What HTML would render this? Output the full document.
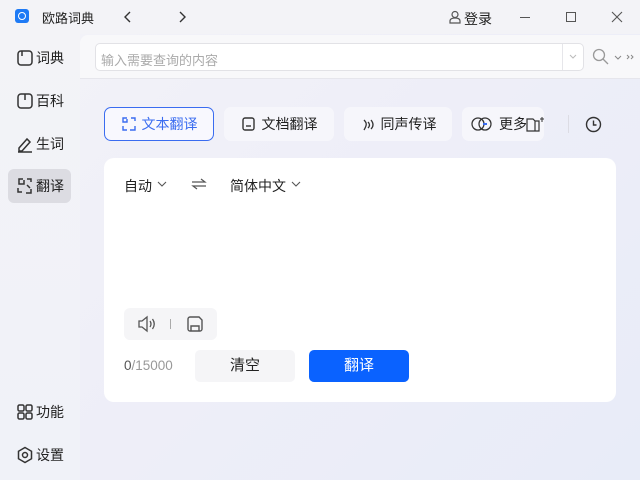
<!DOCTYPE html><html><head><meta charset="utf-8"><style>
*{box-sizing:border-box;margin:0;padding:0}
body{width:640px;height:480px;overflow:hidden;position:relative;font-family:"Liberation Sans","Noto Sans CJK SC",sans-serif;font-size:14px;color:#222;background:linear-gradient(135deg,#f3f3f8 0%,#eeeef8 50%,#e8ecf8 100%)}
.a{position:absolute}
.side{left:0;top:34px;width:80px;height:446px;background:linear-gradient(180deg,#f3f3f7,#f0f2f8)}
.nav{left:8px;width:63px;height:34px;display:flex;align-items:center;padding-left:8px;font-size:14px;color:#222}
.nav svg{margin-right:2px}
.tab{top:107px;height:34px;border-radius:7px;background:#f6f6fb;display:flex;align-items:center;justify-content:center;font-size:14px;color:#222}
.tab svg{margin-right:5px}
</style></head><body>
<div class="a" style="left:0;top:0;width:640px;height:34px;background:#f3f3f7"></div>
<div class="a" style="left:15px;top:9px;width:14px;height:14px;border-radius:3px;background:#1e7af5"></div>
<div class="a" style="left:18px;top:12px;width:8px;height:8px;border-radius:50%;border:1.5px solid #fff"></div>
<div class="a" style="left:42px;top:8px;font-size:13px">欧路词典</div>
<svg class="a" style="left:122px;top:10px" width="12" height="14"><path d="M8 2L3 7l5 5" stroke="#333" stroke-width="1.4" fill="none"/></svg>
<svg class="a" style="left:176px;top:10px" width="12" height="14"><path d="M4 2l5 5-5 5" stroke="#333" stroke-width="1.4" fill="none"/></svg>
<svg class="a" style="left:449px;top:10px" width="12" height="14"><circle cx="6" cy="4.5" r="3" stroke="#555" fill="none" stroke-width="1.2"/><path d="M1 13v-2c0-2 2-3 5-3s5 1 5 3v2z" stroke="#555" fill="none" stroke-width="1.2"/></svg>
<div class="a" style="left:464px;top:9px;font-size:14px">登录</div>
<div class="a" style="left:520px;top:17px;width:10px;height:1px;background:#555"></div>
<div class="a" style="left:566px;top:12px;width:10px;height:10px;border:1px solid #555"></div>
<svg class="a" style="left:611px;top:11px" width="12" height="12"><path d="M1 1l10 10M11 1L1 11" stroke="#555" stroke-width="1.1"/></svg>
<div class="a side"></div>
<div class="a" style="left:80px;top:35px;width:560px;height:44px;background:#f8f8fa;border-top-left-radius:8px;border-bottom:1px solid #e6e6ec"></div>
<div class="a" style="left:95px;top:43px;width:489px;height:28px;background:#fff;border:1px solid #e2e2e6;border-radius:5px"></div>
<div class="a" style="left:562px;top:44px;width:1px;height:26px;background:#e6e6ea"></div>
<div class="a" style="left:101px;top:50px;font-size:13px;color:#aaa">输入需要查询的内容</div>
<svg class="a" style="left:568px;top:53px" width="10" height="8"><path d="M2 2l3 3 3-3" stroke="#bbb" fill="none"/></svg>
<svg class="a" style="left:592px;top:48px" width="18" height="18"><circle cx="7" cy="7" r="5.5" stroke="#999" fill="none" stroke-width="1.3"/><path d="M11 11l5 5" stroke="#999" stroke-width="1.3"/></svg>
<svg class="a" style="left:614px;top:54px" width="26" height="8"><path d="M1 2l3 3 3-3M13 1l2 2-2 2M17 1l2 2-2 2" stroke="#888" fill="none" stroke-width="1"/></svg>
<div class="a nav" style="top:41px"><svg width="18" height="18"><rect x="2" y="2" width="14" height="14" rx="3" stroke="#333" fill="none" stroke-width="1.5"/><path d="M6 2v5" stroke="#333" stroke-width="1.5"/></svg>词典</div>
<div class="a nav" style="top:84px"><svg width="18" height="18"><rect x="2" y="2" width="14" height="14" rx="3" stroke="#333" fill="none" stroke-width="1.5"/><path d="M9 2v6" stroke="#333" stroke-width="1.5"/></svg>百科</div>
<div class="a nav" style="top:127px"><svg width="18" height="18"><path d="M3 13l8-9 3 3-8 9H3z" stroke="#333" fill="none" stroke-width="1.5"/><path d="M2 17h14" stroke="#333" stroke-width="1.5"/></svg>生词</div>
<div class="a nav" style="top:169px;background:#dcdce2;border-radius:6px"><svg width="18" height="18"><path d="M7 2H3v5h5V3M11 2h4v3M2 11v4h4M10 16h5v-4" stroke="#333" fill="none" stroke-width="1.5"/><path d="M11 8l3 3" stroke="#333" stroke-width="1.5"/></svg>翻译</div>
<div class="a nav" style="top:395px"><svg width="18" height="18"><rect x="2" y="2" width="6" height="6" rx="1.5" stroke="#333" fill="none" stroke-width="1.5"/><rect x="10" y="2" width="6" height="6" rx="1.5" stroke="#333" fill="none" stroke-width="1.5"/><rect x="2" y="10" width="6" height="6" rx="1.5" stroke="#333" fill="none" stroke-width="1.5"/><rect x="10" y="10" width="6" height="6" rx="1.5" stroke="#333" fill="none" stroke-width="1.5"/></svg>功能</div>
<div class="a nav" style="top:438px"><svg width="18" height="18"><path d="M9 1.5l6.5 3.75v7.5L9 16.5l-6.5-3.75v-7.5z" stroke="#333" fill="none" stroke-width="1.5"/><circle cx="9" cy="9" r="2.5" stroke="#333" fill="none" stroke-width="1.5"/></svg>设置</div>
<div class="a tab" style="left:104px;width:110px;border:1px solid #3a6cf0;background:#f8f8fe;color:#3a6cf0"><svg width="16" height="16"><path d="M6 2H2v4h4V3M10 2h4v3M2 10v4h4M9 14h5v-4" stroke="#3a6cf0" fill="none" stroke-width="1.4"/></svg>文本翻译</div>
<div class="a tab" style="left:224px;width:110px"><svg width="16" height="16"><rect x="2" y="2" width="11" height="12" rx="2" stroke="#333" fill="none" stroke-width="1.4"/><path d="M5 10h5" stroke="#333" stroke-width="1.4"/></svg>文档翻译</div>
<div class="a tab" style="left:344px;width:108px"><svg width="16" height="16"><path d="M4 4c3 3 3 5 0 10M8 6q3 3 0 6M11 4q4 5 0 9" stroke="#333" fill="none" stroke-width="1.3"/></svg>同声传译</div>
<div class="a tab" style="left:462px;width:82px;justify-content:flex-start;padding-left:8px"><svg width="24" height="16"><circle cx="8" cy="8" r="6" stroke="#333" fill="none" stroke-width="1.3"/><circle cx="15" cy="8" r="6" stroke="#333" fill="none" stroke-width="1.3"/><path d="M13 8h4" stroke="#3a6cf0" stroke-width="2"/></svg>更多</div>
<svg class="a" style="left:526px;top:116px" width="20" height="16"><path d="M1 3h6l2 2v10H1zM9 5h4v10H9" stroke="#333" fill="none" stroke-width="1.2"/><path d="M16 1v5M14 3h4" stroke="#333"/></svg>
<div class="a" style="left:568px;top:115px;width:1px;height:18px;background:#dcdce4"></div>
<svg class="a" style="left:585px;top:116px" width="17" height="17"><circle cx="8.5" cy="8.5" r="7" stroke="#333" fill="none" stroke-width="1.4"/><path d="M8.5 4.5v4.5h3" stroke="#333" fill="none" stroke-width="1.4"/></svg>
<div class="a" style="left:104px;top:158px;width:512px;height:244px;background:#fff;border-radius:10px"></div>
<div class="a" style="left:124px;top:176px;font-size:14px">自动</div>
<svg class="a" style="left:157px;top:180px" width="10" height="8"><path d="M1 2l4 4 4-4" stroke="#555" fill="none" stroke-width="1.1"/></svg>
<svg class="a" style="left:191px;top:177px" width="16" height="14"><path d="M1 5h13l-4-3M15 9H2l4 3" stroke="#555" fill="none" stroke-width="1.2"/></svg>
<div class="a" style="left:230px;top:176px;font-size:14px">简体中文</div>
<svg class="a" style="left:291px;top:180px" width="10" height="8"><path d="M1 2l4 4 4-4" stroke="#555" fill="none" stroke-width="1.1"/></svg>
<div class="a" style="left:124px;top:308px;width:93px;height:32px;background:#f5f5f7;border-radius:6px"></div>
<svg class="a" style="left:137px;top:315px" width="20" height="18"><path d="M2 6h3l5-4v14l-5-4H2z" stroke="#555" fill="none" stroke-width="1.3"/><path d="M13 6q2 3 0 6M15.5 4q3.5 5 0 10" stroke="#555" fill="none" stroke-width="1.3"/></svg>
<div class="a" style="left:170px;top:319px;width:1px;height:10px;background:#aaa"></div>
<svg class="a" style="left:186px;top:315px" width="18" height="18"><path d="M2 4a2 2 0 012-2h9l3 3v9a2 2 0 01-2 2H4a2 2 0 01-2-2z" stroke="#555" fill="none" stroke-width="1.4"/><path d="M5 16v-5h8v5" stroke="#555" fill="none" stroke-width="1.4"/></svg>
<div class="a" style="left:124px;top:358px;font-size:13.5px;color:#999"><span style="color:#555">0</span>/15000</div>
<div class="a" style="left:195px;top:350px;width:100px;height:32px;background:#f5f5f7;border-radius:5px;text-align:center;line-height:32px;font-size:15px">清空</div>
<div class="a" style="left:309px;top:350px;width:100px;height:32px;background:#0a62ff;border-radius:5px;text-align:center;line-height:32px;font-size:15px;color:#fff">翻译</div>
</body></html>
